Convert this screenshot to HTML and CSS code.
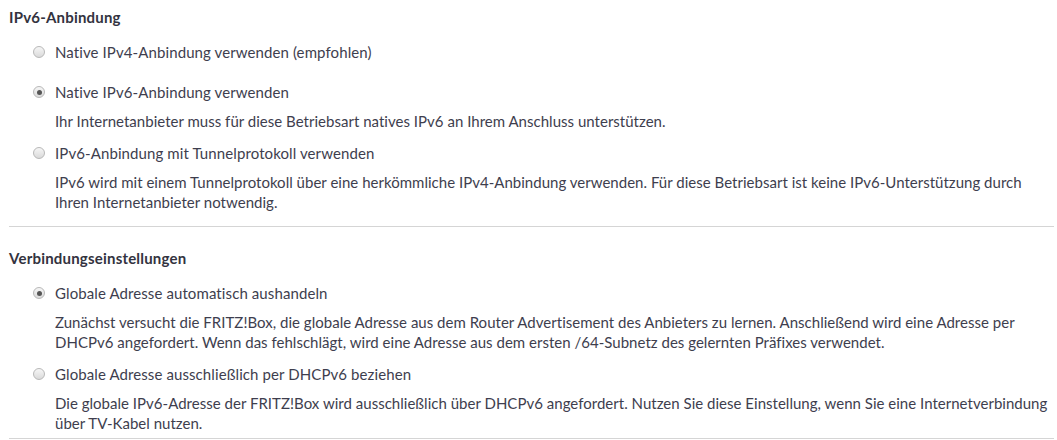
FILE: index.html
```html
<!DOCTYPE html>
<html lang="de">
<head>
<meta charset="utf-8">
<link rel="stylesheet" href="styles.css">
</head>
<body>
<div class="page">
  <section class="group group-first">
    <h4 class="group-title">IPv6-Anbindung</h4>
    <div class="option plain">
      <div class="option-row"><span class="radio"></span><span class="label">Native IPv4-Anbindung verwenden (empfohlen)</span></div>
    </div>
    <div class="option">
      <div class="option-row"><span class="radio checked"></span><span class="label">Native IPv6-Anbindung verwenden</span></div>
      <p class="desc">Ihr Internetanbieter muss für diese Betriebsart natives IPv6 an Ihrem Anschluss unterstützen.</p>
    </div>
    <div class="option">
      <div class="option-row"><span class="radio"></span><span class="label">IPv6-Anbindung mit Tunnelprotokoll verwenden</span></div>
      <p class="desc">IPv6 wird mit einem Tunnelprotokoll über eine herkömmliche IPv4-Anbindung verwenden. Für diese Betriebsart ist keine IPv6-Unterstützung durch Ihren Internetanbieter notwendig.</p>
    </div>
  </section>
  <section class="group group-second">
    <h4 class="group-title">Verbindungseinstellungen</h4>
    <div class="option">
      <div class="option-row"><span class="radio checked"></span><span class="label">Globale Adresse automatisch aushandeln</span></div>
      <p class="desc">Zunächst versucht die FRITZ!Box, die globale Adresse aus dem Router Advertisement des Anbieters zu lernen. Anschließend wird eine Adresse per DHCPv6 angefordert. Wenn das fehlschlägt, wird eine Adresse aus dem ersten /64-Subnetz des gelernten Präfixes verwendet.</p>
    </div>
    <div class="option">
      <div class="option-row"><span class="radio"></span><span class="label">Globale Adresse ausschließlich per DHCPv6 beziehen</span></div>
      <p class="desc">Die globale IPv6-Adresse der FRITZ!Box wird ausschließlich über DHCPv6 angefordert. Nutzen Sie diese Einstellung, wenn Sie eine Internetverbindung über TV-Kabel nutzen.</p>
    </div>
  </section>
</div>
</body>
</html>
```
FILE: styles.css
```css
html, body {
  margin: 0;
  padding: 0;
  background: #ffffff;
}
body {
  font-family: "Lato", "Liberation Sans", sans-serif;
  font-size: 15px;
  letter-spacing: 0.1px;
  color: #3e3e4e;
}
.page {
  width: 1045px;
  margin-left: 9px;
}
.group {
  border-bottom: 1px solid #d5d5d5;
}
.group-first {
  padding-top: 7px;
  padding-bottom: 14px;
}
.group-second {
  padding-top: 21px;
  padding-bottom: 5px;
}
.group-title {
  margin: 0 0 15px 0;
  line-height: 20px;
  font-size: 15px;
  letter-spacing: 0.2px;
  font-weight: bold;
  color: #333340;
}
.option {
  padding-left: 24px;
  margin-bottom: 12px;
}
.option.plain {
  margin-bottom: 20px;
}
.option:last-child {
  margin-bottom: 0;
}
.option-row {
  display: flex;
  align-items: center;
  gap: 10px;
  height: 20px;
}
.radio {
  flex: none;
  width: 12px;
  height: 12px;
  border-radius: 50%;
  box-sizing: border-box;
  border: 1px solid #b8b8b8;
  background: linear-gradient(#f6f6f6, #dadada);
  display: flex;
  align-items: center;
  justify-content: center;
}
.radio.checked::after {
  content: "";
  width: 5px;
  height: 5px;
  border-radius: 50%;
  background: #555555;
}
.label {
  line-height: 20px;
}
.desc {
  margin: 9px 0 0 22px;
  line-height: 20px;
  letter-spacing: 0.02px;
}
```
